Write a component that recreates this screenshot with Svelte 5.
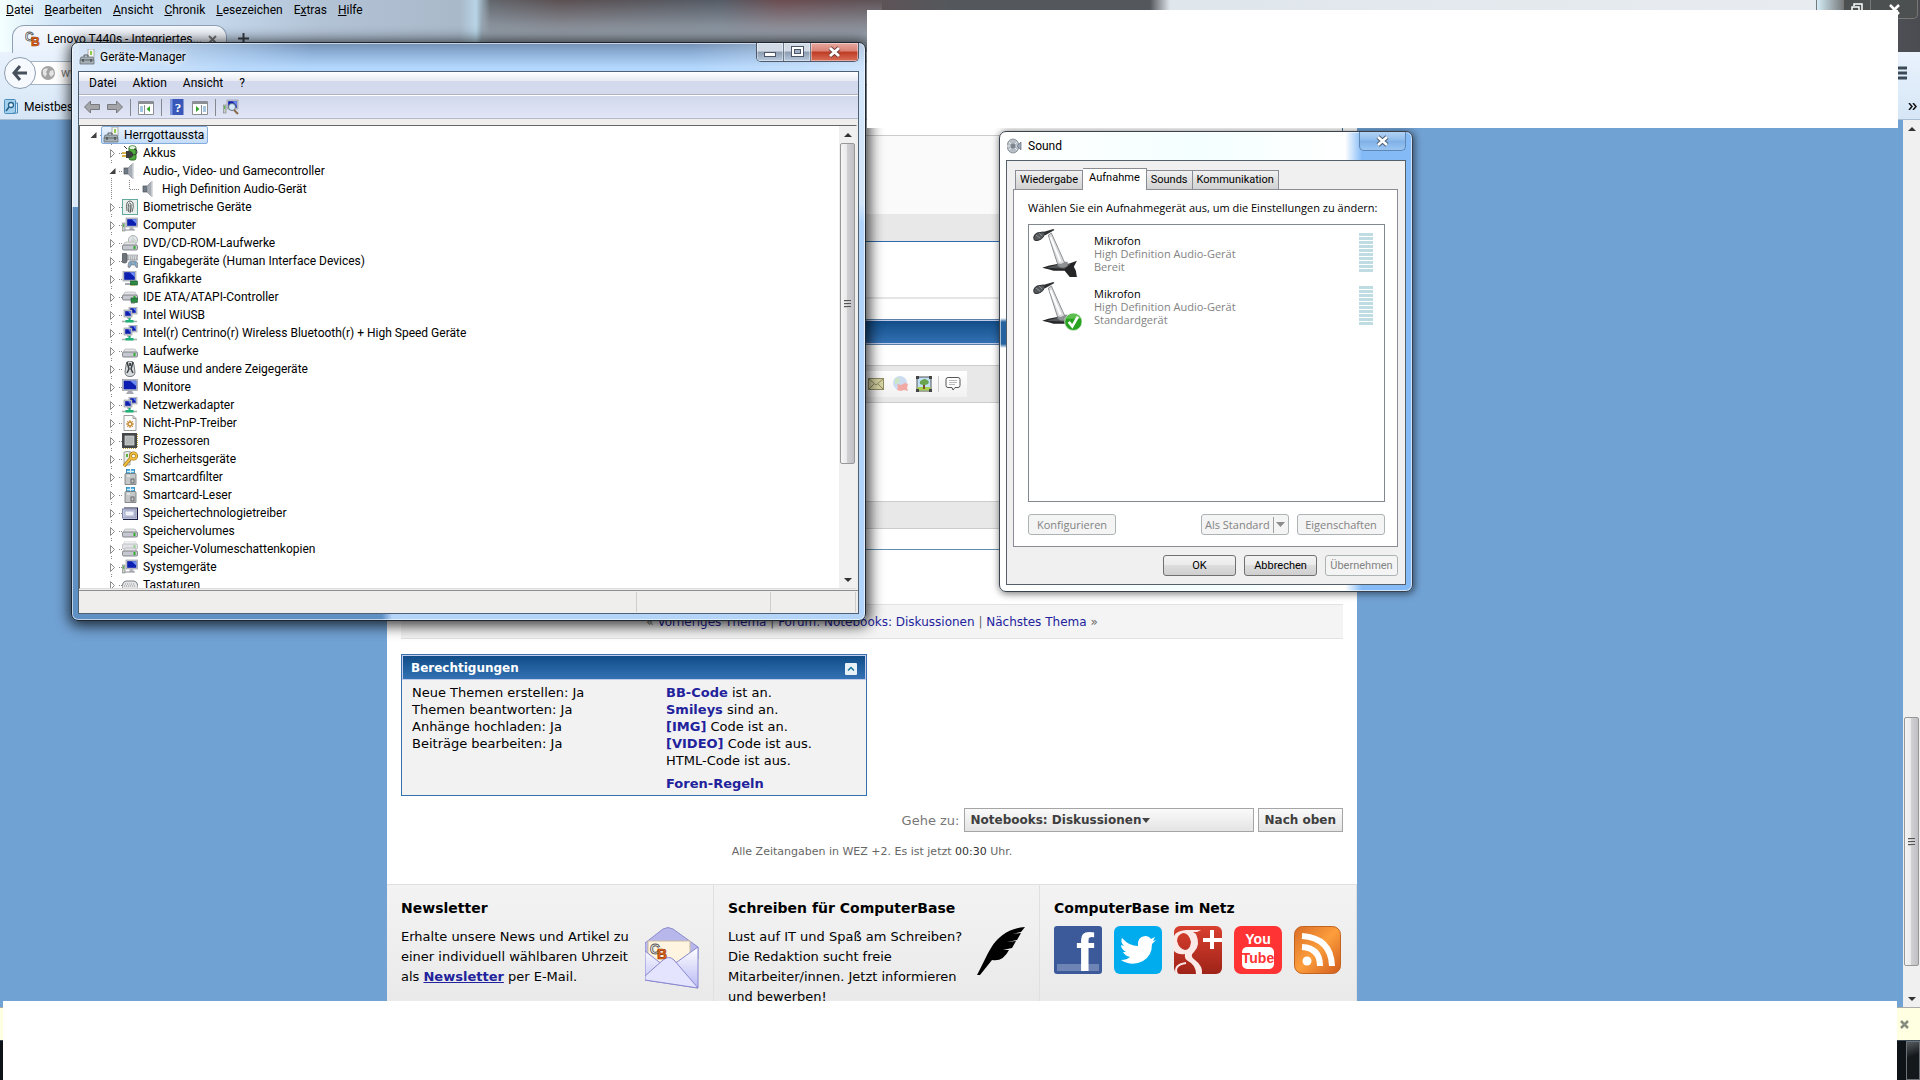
<script lang="ts">
	type Device = { name: string; icon: string; level: number; open?: boolean; leaf?: boolean };

	const browserMenu = ['Datei', 'Bearbeiten', 'Ansicht', 'Chronik', 'Lesezeichen', 'Extras', 'Hilfe'];
	const accessKeys = [0, 0, 0, 0, 0, 1, 0];
	const managerMenu = ['Datei', 'Aktion', 'Ansicht', '?'];

	const devices: Device[] = [
		{ name: 'Herrgottaussta', icon: 'case', level: 0, open: true },
		{ name: 'Akkus', icon: 'battery', level: 1 },
		{ name: 'Audio-, Video- und Gamecontroller', icon: 'speaker', level: 1, open: true },
		{ name: 'High Definition Audio-Gerät', icon: 'speaker', level: 2, leaf: true },
		{ name: 'Biometrische Geräte', icon: 'finger', level: 1 },
		{ name: 'Computer', icon: 'computer', level: 1 },
		{ name: 'DVD/CD-ROM-Laufwerke', icon: 'dvd', level: 1 },
		{ name: 'Eingabegeräte (Human Interface Devices)', icon: 'hid', level: 1 },
		{ name: 'Grafikkarte', icon: 'graphics', level: 1 },
		{ name: 'IDE ATA/ATAPI-Controller', icon: 'ide', level: 1 },
		{ name: 'Intel WiUSB', icon: 'network', level: 1 },
		{ name: 'Intel(r) Centrino(r) Wireless Bluetooth(r) + High Speed Geräte', icon: 'network', level: 1 },
		{ name: 'Laufwerke', icon: 'drive', level: 1 },
		{ name: 'Mäuse und andere Zeigegeräte', icon: 'mouse', level: 1 },
		{ name: 'Monitore', icon: 'monitor', level: 1 },
		{ name: 'Netzwerkadapter', icon: 'network', level: 1 },
		{ name: 'Nicht-PnP-Treiber', icon: 'driver', level: 1 },
		{ name: 'Prozessoren', icon: 'cpu', level: 1 },
		{ name: 'Sicherheitsgeräte', icon: 'key', level: 1 },
		{ name: 'Smartcardfilter', icon: 'card', level: 1 },
		{ name: 'Smartcard-Leser', icon: 'card', level: 1 },
		{ name: 'Speichertechnologietreiber', icon: 'memory', level: 1 },
		{ name: 'Speichervolumes', icon: 'drive', level: 1 },
		{ name: 'Speicher-Volumeschattenkopien', icon: 'shadow', level: 1 },
		{ name: 'Systemgeräte', icon: 'computer', level: 1 },
		{ name: 'Tastaturen', icon: 'keyboard', level: 1 }
	];

	const tabs = ['Wiedergabe', 'Aufnahme', 'Sounds', 'Kommunikation'];
	let activeTab = $state('Aufnahme');
	let selected = $state('Herrgottaussta');

	const recorders = [
		{ name: 'Mikrofon', device: 'High Definition Audio-Gerät', status: 'Bereit', standard: false },
		{ name: 'Mikrofon', device: 'High Definition Audio-Gerät', status: 'Standardgerät', standard: true }
	];
</script>

{#snippet screenShape(x: number, y: number, w: number, h: number)}
	<rect {x} {y} width={w} height={h} fill="#c9ccd2" stroke="#8b9098" stroke-width=".6" />
	<rect x={x + 1.2} y={y + 1.2} width={w - 2.4} height={h - 2.4} fill="#0d1fb0" />
	<path d="M{x + w / 2} {y + 1.2}h{w / 2 - 1.2}v{h / 2}z" fill="#6f8cf0" />
{/snippet}

{#snippet driveShape(y: number)}
	<path d="M2 {y}q0-2 2-2h8q2 0 2 2l1 2H1z" fill="#e3e4e6" stroke="#a5a8ad" stroke-width=".6" />
	<rect x=".5" y={y + 1} width="15" height="5" rx="1.2" fill="#c6c8d0" stroke="#6d7076" stroke-width=".8" />
	<rect x="11.5" y={y + 2} width="2" height="3" fill="#2fae2b" />
{/snippet}

{#snippet icon(name: string)}
	<svg class="icon" viewBox="0 0 16 16" aria-hidden="true">
		{#if name === 'case'}
			<rect x="9" y="0" width="6" height="9" fill="#f6f6f2" stroke="#9b9d9e" stroke-width=".8" />
			<rect x="11" y="2" width="2" height="4" fill="#8ecb4e" />
			<path d="M5 8V6h4v2" fill="none" stroke="#555" />
			<path d="M2 8h12l1 3v4H1v-4z" fill="#a4afb5" stroke="#69747a" stroke-width=".8" />
			<path d="M1 11h14" stroke="#5c666b" />
			<path d="M4 10v3M12 10v3" stroke="#333" />
		{:else if name === 'battery'}
			<rect x="7" y="1" width="7" height="14" rx="2" fill="#4fae3c" stroke="#2b6a20" />
			<ellipse cx="10.500" cy="2.500" rx="3" ry="1.500" fill="#e7efe5" />
			<path d="M0 8h4M0 11h4" stroke="#c99a17" stroke-width="1.400" />
			<path d="M4 6h3q4 0 4 3.500T7 13H4z" fill="#3b3d3e" />
			<path d="M10 10q5 0 5-3t-3-3M2 1l3 3" fill="none" stroke="#333" />
		{:else if name === 'speaker'}
			<rect x="2" y="5" width="4" height="6" fill="#6f7a85" stroke="#4a525a" stroke-width=".7" />
			<path d="M6 5l5-5v16l-5-5z" fill="#a7adb4" stroke="#7f868d" stroke-width=".6" />
			<path d="M11 0v16" stroke="#d8dbde" stroke-width="1.400" />
		{:else if name === 'finger'}
			<rect x=".5" y=".5" width="15" height="15" fill="#e9f0ee" stroke="#62a99d" />
			<path d="M5 12q-1-5 0-8 1-2 3-2t3 2q1 4-1 9M6.500 13q-.5-5 0-8 1-2 2.500 0 .5 4-.5 8M8 14q.5-5 0-8" fill="none" stroke="#444" stroke-width=".8" />
		{:else if name === 'computer'}
			<rect x=".5" y="6" width="2.500" height="8" fill="#c9ccc9" stroke="#7c827c" stroke-width=".6" />
			<rect x="1.200" y="7" width="1" height="3" fill="#41b339" />
			{@render screenShape(4, 1, 11.5, 9)}
			<path d="M8 10h3l1 3H7z" fill="#b5b9bf" />
			<path d="M3 13h10" stroke="#8a8e94" />
		{:else if name === 'dvd'}
			<circle cx="11" cy="5" r="4.500" fill="#e4e8ea" stroke="#9aa0a5" stroke-width=".8" />
			<circle cx="11" cy="5" r="1.300" fill="#fff" stroke="#9aa0a5" stroke-width=".6" />
			<path d="M11 1v2M14 6l-2-1" stroke="#b9dcae" />
			{@render driveShape(9)}
		{:else if name === 'hid'}
			<rect x="5" y="2" width="11" height="5" fill="#d2d5d9" stroke="#888d94" stroke-width=".6" />
			<path d="M6 4h9M6 6h9" stroke="#777" stroke-width=".6" stroke-dasharray="1 1" />
			<rect x="0" y="0" width="5" height="10" rx="2" fill="#70757c" stroke="#43474c" stroke-width=".6" />
			<path d="M6 14q0-6 3-6h4q3 0 3 6-2 2-3-2h-4q-1 4-3 2z" fill="#9ba8b6" stroke="#5f6e80" stroke-width=".6" />
			<path d="M9 9v3M13 9v3" stroke="#4aa3dc" />
		{:else if name === 'graphics'}
			{@render screenShape(1, 0, 13, 10)}
			<path d="M3 13h8" stroke="#a5a9af" stroke-width="2" />
			<rect x="8.500" y="10" width="7" height="4" fill="#2d8a45" stroke="#1a5229" stroke-width=".6" />
			<path d="M10 15v-1M12 15v-1" stroke="#c99a17" />
		{:else if name === 'ide'}
			{@render driveShape(5)}
			<rect x="9" y="9" width="6.500" height="4.500" fill="#2d8a45" stroke="#1a5229" stroke-width=".6" />
			<path d="M10 15v-1M12 15v-1" stroke="#777" />
		{:else if name === 'network'}
			{@render screenShape(7, 0, 8, 7)}
			{@render screenShape(2, 3, 8, 7)}
			<path d="M5 11h4" stroke="#a5a9af" stroke-width="1.500" />
			<path d="M0 14.500h15" stroke="#9eb0a8" stroke-width="1.500" />
			<path d="M6.500 11h2v2h3v2.500h-8V13h3z" fill="#1fb277" />
		{:else if name === 'drive'}
			{@render driveShape(8)}
		{:else if name === 'mouse'}
			<path d="M8 0q4 0 4 4l1 7q0 4.500-5 4.500T3 11l1-7q0-4 4-4z" fill="#d6dadd" stroke="#595e62" stroke-width=".8" />
			<path d="M5 1l2 7-2 4M11 1L9 8l2 4" fill="none" stroke="#3c4246" stroke-width="1.500" />
			<rect x="7.300" y="2" width="1.500" height="3" fill="#222" />
		{:else if name === 'monitor'}
			{@render screenShape(0.5, 0.5, 15, 11)}
			<path d="M6 12h4l2 3H4z" fill="#a5a9af" />
		{:else if name === 'driver'}
			<path d="M2 .5h9l3 3v12H2z" fill="#fcfcfc" stroke="#9c9c9c" />
			<path d="M11 .5v3h3" fill="none" stroke="#9c9c9c" />
			<circle cx="8" cy="9" r="2" fill="#fff3d8" stroke="#c78a35" stroke-width="1.400" />
			<path d="M8 5v2M8 11v2M4 9h2M10 9h2M5.200 6.200l1.400 1.400M9.500 10.500l1.400 1.400M10.900 6.200L9.500 7.600M6.600 10.400l-1.400 1.400" stroke="#c78a35" />
		{:else if name === 'cpu'}
			<path d="M1 15.500h14M15.500 1v13" stroke="#c9a445" stroke-dasharray="1 1" />
			<rect x="0" y="0" width="15" height="15" fill="#45484a" />
			<rect x="3" y="3" width="9" height="9" fill="#b3b7b7" stroke="#e3e5e5" stroke-width=".6" />
		{:else if name === 'key'}
			<path d="M2 1l6-1v14H2z" fill="#e8e9e4" stroke="#8a8d86" stroke-width=".8" />
			<rect x="4" y="3" width="2" height="3" fill="#58b33e" />
			<path d="M2 15l7-8" stroke="#8b640d" stroke-width="3.400" />
			<circle cx="11.500" cy="5" r="3" fill="none" stroke="#8b640d" stroke-width="3" />
			<path d="M2 15l7-8" stroke="#f0be3d" stroke-width="2" />
			<circle cx="11.500" cy="5" r="3" fill="none" stroke="#f0be3d" stroke-width="1.800" />
		{:else if name === 'card'}
			<rect x="4.500" y="0" width="8" height="5" fill="#59b7e8" stroke="#2a7bad" stroke-width=".8" />
			<path d="M8.500 0v5M5 2.500h7" stroke="#d8f0fb" />
			<path d="M4 4.500h9q1 0 1 1v10H3v-10q0-1 1-1z" fill="#c3c7c8" stroke="#6e7475" stroke-width=".8" />
			<path d="M5 7h3" stroke="#fff" />
			<rect x="9" y="10" width="3" height="4" fill="none" stroke="#666" />
		{:else if name === 'memory'}
			<path d="M2 3h13.500v11.500H1" fill="none" stroke="#181c40" stroke-width="1.200" />
			<rect x=".5" y="4" width="13.500" height="9" fill="#c6cbe4" stroke="#8088a8" />
			<rect x="3" y="6" width="9" height="5" fill="#f1f3fb" stroke="#8088a8" stroke-width=".6" />
		{:else if name === 'shadow'}
			<g opacity=".5">{@render driveShape(2)}</g>
			{@render driveShape(9)}
		{:else if name === 'keyboard'}
			<path d="M0 9q1-5 4-5h8q3 0 4 5v3H0z" fill="#e2e4e6" stroke="#6d7278" stroke-width=".9" />
			<path d="M3 7h10M2 9h12" stroke="#999" stroke-dasharray="1 1" />
		{/if}
	</svg>
{/snippet}

{#snippet cbLogo()}
	<text x="0" y="10" class="cb-c">C</text>
	<text x="6" y="15" class="cb-b">B</text>
{/snippet}

{#snippet microphone(standard: boolean)}
	<svg class="mic" viewBox="0 0 48 48" aria-hidden="true">
		<path d="M9 38l6-2 10-2 10 0 8-3-3 6 2 4 1 6h-7l-5-6-11 0-3-1z" fill="#242526" />
		<path d="M13 38l11-3 13-1-6 5z" fill="#55585a" />
		<path d="M24 36q5 4 10 0v-4H24z" fill="#8d9194" />
		<path d="M15 6l3-2 13 29q-4 3-7 1z" fill="#d9dbdc" stroke="#777b7e" stroke-width=".8" />
		<path d="M17 8l10 24" stroke="#fff" stroke-width="2" />
		<path d="M10 3l10-3 1 1-9 5z" fill="#2d2f31" />
		<path d="M1 10q-1-4 3-6l6-1q2 1 1 3-2 4-6 5-3 1-4-1z" fill="#55595c" stroke="#303335" />
		<path d="M3 6l4 3M6 4l3 3" stroke="#9b9fa2" stroke-width=".8" />
		{#if standard}
			<circle cx="39.500" cy="39" r="8.500" fill="#27a31f" stroke="#d8ecd6" stroke-width=".8" />
			<path d="M32 36q3-5 8-5t7 5q-8 0-15 0z" fill="#7fd16d" opacity=".6" />
			<path d="M35 39l3.500 4.500L44 34" fill="none" stroke="#fff" stroke-width="2.600" />
		{/if}
	</svg>
{/snippet}

{#snippet scrollbar(kind: string)}
	<div class="scrollbar {kind}">
		<svg class="arrow" viewBox="0 0 17 17"><path d="M5 11l4-4 4 4z" fill="#333" /></svg>
		<div class="track">
			<div class="thumb"><i></i><i></i><i></i></div>
		</div>
		<svg class="arrow" viewBox="0 0 17 17"><path d="M5 7l4 4 4-4z" fill="#333" /></svg>
	</div>
{/snippet}

<div class="screen">
	<header class="chrome">
		<nav class="menubar">
			{#each browserMenu as item, i}
				<button>{item.slice(0, accessKeys[i])}<u>{item[accessKeys[i]]}</u>{item.slice(accessKeys[i] + 1)}</button>
			{/each}
		</nav>
		<div class="tabstrip">
			<div class="browser-tab">
				<svg class="icon" viewBox="0 0 16 16" aria-hidden="true">{@render cbLogo()}</svg>
				<span class="tab-title">Lenovo T440s - Integriertes...</span>
				<button aria-label="Tab schließen">
					<svg width="9" height="9" viewBox="0 0 9 9"><path d="M1 1l7 7M8 1L1 8" stroke="#777" stroke-width="2" /></svg>
				</button>
			</div>
			<button class="new-tab" aria-label="Neuer Tab">
				<svg width="11" height="11" viewBox="0 0 11 11"><path d="M5.500 0v11M0 5.500h11" stroke="#3a3f47" stroke-width="2" /></svg>
			</button>
		</div>
		<div class="navbar">
			<button class="back" aria-label="Zurück">
				<svg width="16" height="16" viewBox="0 0 16 16"><path d="M8 1L2 8l6 7M2 8h13" fill="none" stroke="#45505c" stroke-width="3" /></svg>
			</button>
			<div class="url">
				<svg width="14" height="14" viewBox="0 0 14 14"><circle cx="7" cy="7" r="7" fill="#a3a3a3" /><path d="M2 4q3-3 5-1l-2 3 1 2-2 3-2-3zM9 5l3-1 1 4-3 3-2-3z" fill="#e4e4e4" /></svg>
				<input aria-label="Adresse" value="www." />
			</div>
			<button class="burger" aria-label="Menü öffnen">
				<svg width="16" height="14" viewBox="0 0 16 14"><path d="M0 2h16M0 7h16M0 12h16" stroke="#3c4a58" stroke-width="3" /></svg>
			</button>
		</div>
		<div class="bookmarks">
			<svg width="14" height="15" viewBox="0 0 14 15"><rect x=".5" y=".5" width="11" height="14" rx="1" fill="#a4d0ee" stroke="#4a8cb8" /><path d="M12 4h1.500v10H9" fill="none" stroke="#4a8cb8" /><circle cx="7" cy="6" r="2.500" fill="#e3f3fc" stroke="#24618c" stroke-width="1.300" /><path d="M5 8l-3 4" stroke="#24618c" stroke-width="1.500" /></svg>
			<a href="#top">Meistbesucht</a>
			<button class="more" aria-label="Weitere Lesezeichen">
				<svg width="9" height="7" viewBox="0 0 9 7"><path d="M1 0l3 3.500L1 7M5 0l3 3.500L5 7" fill="none" stroke="#111" stroke-width="1.500" /></svg>
			</button>
		</div>
		<div class="browser-controls">
			<button class="light" aria-label="Minimieren"><svg width="12" height="10" viewBox="0 0 12 10"><path d="M0 8h12" stroke="#445" stroke-width="4" /><path d="M1 8h10" stroke="#fff" stroke-width="2" /></svg></button>
			<button aria-label="Verkleinern"><svg width="12" height="12" viewBox="0 0 12 12"><path d="M3 3V1h8v8H9M1 4h7v7H1z" fill="none" stroke="#fff" stroke-width="1.500" /></svg></button>
			<button class="wide" aria-label="Schließen"><svg width="11" height="11" viewBox="0 0 11 11"><path d="M1 1l9 9M10 1l-9 9" stroke="#fff" stroke-width="2.500" /></svg></button>
		</div>
	</header>

	<div class="viewport">
		<main class="page">
			<section class="thread">
				<div class="rule-space"></div>
				<div class="post-end"></div>
				<div class="bar blue-line"></div>
				<div class="gap-large"></div>
				<div class="gap-small"></div>
				<div class="head"></div>
				<div class="gap-mini"></div>
				<div class="post-tools">
					<div class="tools">
						<button aria-label="E-Mail"><svg class="icon" viewBox="0 0 16 16"><rect x=".5" y="2.500" width="15" height="11" fill="#d8d5a5" stroke="#8f8c62" /><path d="M1 3l7 6 7-6M1 13l5-5M15 13l-5-5" fill="none" stroke="#8f8c62" /></svg></button>
						<button aria-label="Link entfernen"><svg class="icon" viewBox="0 0 16 16"><circle cx="8" cy="7" r="7" fill="#cbdcf0" /><path d="M3 3q3-2 5 0l-1 4-4 1z" fill="#cbe6c5" /><path d="M5 8l4 1 4-2 3 1-1 4 1 3-4-1-3 1-4-1 1-3z" fill="#f1a9a4" /></svg></button>
						<button aria-label="Bild einfügen"><svg class="icon" viewBox="0 0 16 16"><rect x="1" y="1" width="14" height="14" fill="#bfe0f7" stroke="#555" /><path d="M1.500 11h13v3.500h-13z" fill="#a6cf4a" /><path d="M8 8v5" stroke="#7b5327" stroke-width="2" /><path d="M4 8q-1-3 2-4 3-2 5 0 3 1 1 4-4 2-8 0z" fill="#6aa44f" /><path d="M0 0h3v3H0zM13 0h3v3h-3zM0 13h3v3H0zM13 13h3v3h-3z" fill="#444" /></svg></button>
						<span class="tool-line"></span>
						<button aria-label="Zitat einfügen"><svg class="icon" viewBox="0 0 16 16"><path d="M3 1.500h10q2 0 2 2v6q0 2-2 2h-3L8 14l-1-2.500H3q-2 0-2-2v-6q0-2 2-2z" fill="#fff" stroke="#555" /><path d="M4 4.500h8M4 6.500h8M4 8.500h6" stroke="#bbb" /></svg></button>
					</div>
				</div>
				<div class="editor"></div>
				<div class="bar grey-line"></div>
				<div class="thread-end"></div>
			</section>

			<nav class="thread-nav">
				« <a href="#prev">Vorheriges Thema</a> | <a href="#forum">Forum: Notebooks: Diskussionen</a> | <a href="#next">Nächstes Thema</a> »
			</nav>

			<section class="rights">
				<h2>
					Berechtigungen
					<button aria-label="Einklappen">
						<svg width="12" height="12" viewBox="0 0 12 12"><rect width="12" height="12" rx="1" fill="#e8f1f5" /><path d="M3 7.500l3-3 3 3" fill="none" stroke="#17759b" stroke-width="1.500" /></svg>
					</button>
				</h2>
				<div class="rights-body">
					<ul>
						<li>Neue Themen erstellen: Ja</li>
						<li>Themen beantworten: Ja</li>
						<li>Anhänge hochladen: Ja</li>
						<li>Beiträge bearbeiten: Ja</li>
					</ul>
					<ul>
						<li><a href="#bb">BB-Code</a> ist an.</li>
						<li><a href="#smileys">Smileys</a> sind an.</li>
						<li><a href="#img">[IMG]</a> Code ist an.</li>
						<li><a href="#video">[VIDEO]</a> Code ist aus.</li>
						<li>HTML-Code ist aus.</li>
						<li class="rules"><a href="#rules">Foren-Regeln</a></li>
					</ul>
				</div>
			</section>

			<div class="jump">
				<span>Gehe zu:</span>
				<button class="jump-menu">Notebooks: Diskussionen<svg width="8" height="5" viewBox="0 0 8 5"><path d="M0 0h8L4 5z" fill="#444" /></svg></button>
				<button>Nach oben</button>
			</div>
			<p class="zone">Alle Zeitangaben in WEZ +2. Es ist jetzt <span>00:30</span> Uhr.</p>

			<footer class="site-footer">
				<section>
					<h3>Newsletter</h3>
					<div class="teaser">
						<p>Erhalte unsere News und Artikel zu einer individuell wählbaren Uhrzeit als <a href="#newsletter">Newsletter</a> per E-Mail.</p>
						<svg class="envelope" width="54" height="62" viewBox="0 0 54 62" aria-hidden="true">
							<defs><linearGradient id="env" x2="0" y2="1"><stop offset="0" stop-color="#fff" /><stop offset="1" stop-color="#b9b9f5" /></linearGradient></defs>
							<path d="M0 16L18 2q5-3 10 0l25 18v12H0z" fill="#b7b7ec" stroke="#8d8dcc" />
							<path d="M3 14h42v28H3z" fill="#fff4df" stroke="#c9bda5" />
							<path d="M0 24l18 14 14-3 21-15v41L0 53z" fill="url(#env)" stroke="#8888cf" />
							<path d="M0 49l18-16q6-5 11 0l24 28L0 53z" fill="#e4e4ff" stroke="#8888cf" />
							<g transform="translate(5 15) scale(1.150)">{@render cbLogo()}</g>
						</svg>
					</div>
				</section>
				<section>
					<h3>Schreiben für ComputerBase</h3>
					<div class="teaser">
						<p>Lust auf IT und Spaß am Schreiben? Die Redaktion sucht freie Mitarbeiter/innen. Jetzt informieren und bewerben!</p>
						<svg width="48" height="48" viewBox="0 0 48 48" aria-hidden="true">
							<path d="M0 48C6 37 9 29 14 21 21 9 33 1 48 0l-4 5-9 2 9-1-4 7-10 2 9-1-4 7-9 2 6 0q-6 12-17 10L3 48z" />
						</svg>
					</div>
				</section>
				<section>
					<h3>ComputerBase im Netz</h3>
					<div class="social">
						<a href="#facebook" aria-label="Facebook">
							<svg viewBox="0 0 48 48"><rect width="48" height="48" rx="3" fill="#3c5a99" /><path d="M3 38h42v7H3z" fill="#6e84b5" /><text x="22" y="45" class="fb">f</text></svg>
						</a>
						<a href="#twitter" aria-label="Twitter">
							<svg viewBox="0 0 48 48"><rect width="48" height="48" rx="6" fill="#00aced" /><path d="M8 12q7 8 16 8-1-9 7-10 4 0 6 3l4-2-2 4 3-1-4 4q0 12-9 17-11 6-22-1 6 0 9-3-5-1-7-5h3q-5-3-5-7l3 1q-4-4-2-8z" fill="#fff" /></svg>
						</a>
						<a href="#google" aria-label="Google+">
							<svg viewBox="0 0 48 48">
								<defs><linearGradient id="gp" x2="0" y2="1"><stop offset="0" stop-color="#d9402f" /><stop offset="1" stop-color="#9f2318" /></linearGradient></defs>
								<rect width="48" height="48" rx="6" fill="url(#gp)" />
								<path d="M27 4H12Q2 5 0 10v15q4 4 11 3-1 5 3 7 8 4 8 13h6q1-8-7-14-6-4-1-8 7-7 2-18l-3-2h4zM9 7q6 0 8 9-1 8-6 8-6-1-8-9 0-6 6-8z" fill="#fbe9e7" fill-rule="evenodd" />
								<path d="M3 48Q-1 39 12 37" fill="none" stroke="#fbe9e7" stroke-width="2" />
								<path d="M36 4h4v8h8v4h-8v7h-4v-7h-7v-4h7z" fill="#fff" />
							</svg>
						</a>
						<a href="#youtube" aria-label="YouTube">
							<svg viewBox="0 0 48 48"><rect width="48" height="48" rx="7" fill="#ff3333" /><rect x="8" y="21" width="32" height="22" rx="5" fill="#fff" /><text x="24" y="18" class="yt you">You</text><text x="24" y="37" class="yt">Tube</text></svg>
						</a>
						<a href="#rss" aria-label="RSS">
							<svg viewBox="0 0 48 48">
								<defs><linearGradient id="rss" x2="1" y2="1"><stop offset="0" stop-color="#d96d27" /><stop offset=".5" stop-color="#fc9e3c" /><stop offset="1" stop-color="#d05b1e" /></linearGradient></defs>
								<rect x=".5" y=".5" width="46" height="47" rx="8" fill="url(#rss)" stroke="#c4641f" />
								<circle cx="13" cy="35" r="4.500" fill="#fff" /><path d="M8 21q18 1 18 19M8 10q29 2 30 30" fill="none" stroke="#fff" stroke-width="6" />
							</svg>
						</a>
					</div>
				</section>
			</footer>
		</main>
		{@render scrollbar('page-scroll')}
	</div>

	<div class="notice">
		<button aria-label="Hinweis schließen"><svg width="9" height="9" viewBox="0 0 9 9"><path d="M1 1l7 7M8 1L1 8" stroke="#888c80" stroke-width="2.500" /></svg></button>
	</div>
	<div class="taskbar"><button class="show-desktop" aria-label="Desktop anzeigen"></button></div>

	<section class="window manager">
		<header class="titlebar">
			{@render icon('case')}
			<h1>Geräte-Manager</h1>
			<div class="controls">
				<button aria-label="Minimieren"><svg width="13" height="12" viewBox="0 0 13 12"><rect x=".5" y="6.500" width="11" height="4" fill="#fff" stroke="#4b5566" /></svg></button>
				<button aria-label="Maximieren"><svg width="13" height="12" viewBox="0 0 13 12"><rect x="2" y="2" width="9" height="7" fill="#9fb0c5" stroke="#4b5566" stroke-width="4" /><rect x="2" y="2" width="9" height="7" fill="none" stroke="#fff" stroke-width="2" /></svg></button>
				<button class="close" aria-label="Schließen"><svg width="13" height="12" viewBox="0 0 13 12"><path d="M2 2l9 8M11 2l-9 8" stroke="#6b3a3a" stroke-width="4.500" /><path d="M2 2l9 8M11 2l-9 8" stroke="#fff" stroke-width="3" /></svg></button>
			</div>
		</header>
		<div class="manager-client">
			<nav class="manager-menu">
				{#each managerMenu as item}
					<button>{item}</button>
				{/each}
			</nav>
			<div class="toolbar">
				<button aria-label="Zurück"><svg class="icon" viewBox="0 0 16 16"><path d="M.5 8l6-6v3.500h9v5h-9V14z" fill="#a3a5a8" stroke="#77797c" /></svg></button>
				<button aria-label="Vorwärts"><svg class="icon" viewBox="0 0 16 16"><path d="M15.500 8l-6-6v3.500h-9v5h9V14z" fill="#a3a5a8" stroke="#77797c" /></svg></button>
				<span class="tool-sep"></span>
				<button aria-label="Konsolenstruktur"><svg class="icon" viewBox="0 0 16 16"><path d="M.5 2.500h15v13H.5z" fill="#fff" stroke="#8b8f94" /><path d="M0 4h16" stroke="#8b8f94" stroke-width="2" /><path d="M2 8h3M2 10h3M2 12h3" stroke="#4b8dc0" /><path d="M6.500 6v9" stroke="#8b8f94" /><path d="M12 7v6l-3.500-3z" fill="#31a52c" /></svg></button>
				<span class="tool-sep"></span>
				<button aria-label="Hilfe"><svg class="icon" viewBox="0 0 16 16"><rect x="1.500" width="13" height="16" fill="#3857b8" /><path d="M2.500 0v16" stroke="#7f99e3" stroke-width="2" /><text x="9" y="13" class="help">?</text></svg></button>
				<button aria-label="Aktionsbereich"><svg class="icon" viewBox="0 0 16 16"><path d="M.5 2.500h15v13H.5z" fill="#fff" stroke="#8b8f94" /><path d="M0 4h16" stroke="#8b8f94" stroke-width="2" /><path d="M11 8h3M11 10h3M11 12h3" stroke="#4b8dc0" /><path d="M9.500 6v9" stroke="#8b8f94" /><path d="M4 7v6l3.500-3z" fill="#31a52c" /></svg></button>
				<span class="tool-sep"></span>
				<button aria-label="Nach geänderter Hardware suchen"><svg class="icon" viewBox="0 0 16 16"><rect x=".5" y="6" width="2.500" height="8" fill="#c9ccc9" stroke="#7c827c" stroke-width=".6" /><rect x="1.200" y="7" width="1" height="3" fill="#41b339" />{@render screenShape(4, 1, 11, 9)}<circle cx="9" cy="8" r="3.500" fill="#d5ebf9" stroke="#6a7480" /><path d="M11 11l4 4" stroke="#8a6a4a" stroke-width="2" /></svg></button>
			</div>
			<div class="tree-frame">
				<ul class="tree" role="tree">
					{#each devices as device}
						<li role="treeitem" aria-selected={selected === device.name} class="level-{device.level}" class:leaf={device.leaf}>
							<svg class="expander" viewBox="0 0 11 14" aria-hidden="true">
								{#if device.open}
									<path d="M6.500 4v6H.5z" fill="#404040" />
								{:else if !device.leaf}
									<path d="M1.500 3.500v8l4-4z" fill="#fff" stroke="#8c8c8c" />
								{/if}
								{#if device.leaf}
									<path d="M1.500-2V7" stroke="#888" stroke-dasharray="1 1" />
									<path d="M2 7.500h10" stroke="#888" stroke-dasharray="1 1" />
								{:else}
									<path d="M10 7.500h3" stroke="#888" stroke-dasharray="1 1" />
								{/if}
							</svg>
							<button class="node" class:selected={selected === device.name} onclick={() => (selected = device.name)}>
								{@render icon(device.icon)}
								{device.name}
							</button>
						</li>
					{/each}
				</ul>
				{@render scrollbar('tree-scroll')}
			</div>
			<div class="statusbar"><span></span><span></span><span></span></div>
		</div>
	</section>

	<section class="window sound">
		<header class="titlebar">
			<svg class="icon" viewBox="0 0 16 16" aria-hidden="true"><ellipse cx="6" cy="8" rx="6" ry="7" fill="#b6bdc4" stroke="#8c949b" /><path d="M2 4l8 8M2 12l8-8M0 8h12" stroke="#e6eaed" /><circle cx="6" cy="8" r="2.500" fill="#7d868e" /><path d="M10 8l4-4v8z" fill="#9ba8b8" stroke="#65717d" stroke-width=".7" /></svg>
			<h1>Sound</h1>
			<button class="glass-close" aria-label="Schließen"><svg width="13" height="12" viewBox="0 0 13 12"><path d="M2 2l9 8M11 2l-9 8" stroke="#4f5f75" stroke-width="4.500" /><path d="M2 2l9 8M11 2l-9 8" stroke="#fff" stroke-width="2.500" /></svg></button>
		</header>
		<div class="sound-client">
			<div class="tabs" role="tablist">
				{#each tabs as tab}
					<button role="tab" aria-selected={activeTab === tab} class:active={activeTab === tab} onclick={() => (activeTab = tab)}>{tab}</button>
				{/each}
			</div>
			<div class="panel" role="tabpanel">
				<p>Wählen Sie ein Aufnahmegerät aus, um die Einstellungen zu ändern:</p>
				<ul class="recorders">
					{#each recorders as recorder}
						<li>
							{@render microphone(recorder.standard)}
							<div class="details">
								<strong>{recorder.name}</strong>
								<span>{recorder.device}</span>
								<span>{recorder.status}</span>
							</div>
							<div class="meter">
								{#each Array(10) as _}<i></i>{/each}
							</div>
						</li>
					{/each}
				</ul>
				<div class="panel-buttons">
					<button class="btn" disabled>Konfigurieren</button>
					<button class="btn split" disabled>Als Standard<svg width="16" height="16" viewBox="0 0 16 16"><path d="M1.500 0v16" stroke="#a0a0a0" /><path d="M4 5h9l-4.500 5z" fill="#8c8c8c" /></svg></button>
					<button class="btn" disabled>Eigenschaften</button>
				</div>
			</div>
			<div class="dialog-buttons">
				<button class="btn">OK</button>
				<button class="btn">Abbrechen</button>
				<button class="btn" disabled>Übernehmen</button>
			</div>
		</div>
	</section>

	<div class="blank blank-top"></div>
	<div class="blank blank-bottom"></div>
</div>

<style>
	:global(body) {
		margin: 0;
	}

	.screen,
	.screen :global(*) {
		box-sizing: border-box;
	}

	.screen {
		position: relative;
		display: flex;
		flex-direction: column;
		height: 100vh;
		overflow: hidden;
		background: #71a2d4;
		color: #000;
		font: 12px/18px Roboto, 'Noto Sans', sans-serif;
	}

	h1, h2, h3, p, ul {
		margin: 0;
		padding: 0;
		font-weight: normal;
		list-style: none;
	}

	button {
		margin: 0;
		padding: 0;
		border: 0;
		background: none;
		color: inherit;
		font: inherit;
		white-space: nowrap;
	}

	svg {
		display: block;
		flex: none;
	}

	.icon {
		width: 16px;
		height: 16px;
	}

	.cb-c {
		font: bold 12px 'Liberation Sans', sans-serif;
		fill: #fff;
		stroke: #555;
		stroke-width: 0.8px;
	}

	.cb-b {
		font: bold 12px 'Liberation Sans', sans-serif;
		fill: #f26a1b;
		stroke: #8a2f00;
		stroke-width: 0.6px;
	}

	.help {
		font: bold 13px 'Liberation Serif', serif;
		fill: #fff;
		text-anchor: middle;
	}

	/* browser chrome */
	.chrome {
		position: relative;
		flex: none;
		height: 120px;
		border-bottom: 1px solid #a9bdd2;
		background:
			linear-gradient(#e9f2fd, #d6e6f6) 0 52px / 100% 68px no-repeat,
			linear-gradient(transparent 0, rgba(155, 166, 178, 0.9) 34px) 482px 0 / 400px 52px no-repeat,
			linear-gradient(90deg, #f4ffff 0, #cfe4f6 60px, #c3d6ea 220px, #b3c3d6 320px, #a9b9ca 460px, #b8d4e6 476px, #62666c 490px, #5b5052 560px, #555c66 720px, #6b4c50 780px, #54585c 950px, #54585c 1150px, #dfe6ec 1170px, #e8ecf0 1814px, #d4ecf6 1818px, #55585a 1840px, #4a4c52 100%);
	}

	.menubar {
		display: flex;
		gap: 11px;
		padding: 0 6px;
		height: 20px;
		line-height: 20px;
	}

	.tabstrip {
		display: flex;
		align-items: center;
		height: 32px;
		padding: 5px 0 0 12px;
	}

	.browser-tab {
		display: flex;
		align-items: center;
		gap: 6px;
		width: 215px;
		height: 28px;
		padding: 0 12px;
		border: 1px solid #8fa0b4;
		border-bottom: 0;
		border-radius: 12px 12px 0 0;
		background: linear-gradient(#f6f9fd, #e9f2fd);
	}

	.tab-title {
		flex: 1;
		white-space: nowrap;
	}

	.new-tab {
		margin-left: 11px;
	}

	.navbar {
		display: flex;
		align-items: center;
		height: 42px;
		padding: 0 13px 0 4px;
	}

	.back {
		z-index: 1;
		display: grid;
		place-items: center;
		width: 32px;
		height: 32px;
		border: 1px solid #8d9db0;
		border-radius: 50%;
		background: #f6f9fd;
	}

	.url {
		flex: 1;
		display: flex;
		align-items: center;
		gap: 6px;
		height: 24px;
		margin: 0 50px 0 -6px;
		padding-left: 10px;
		border: 1px solid #a5b3c3;
		background: #fff;
	}

	.url input {
		flex: 1;
		padding: 0;
		border: 0;
		background: none;
		color: #777;
		font: inherit;
	}

	.bookmarks {
		display: flex;
		align-items: center;
		gap: 6px;
		height: 25px;
		padding: 0 3px 0 4px;
	}

	.bookmarks a {
		color: #000;
		text-decoration: none;
	}

	.more {
		margin-left: auto;
	}

	.browser-controls {
		position: absolute;
		top: 0;
		right: 2px;
		display: flex;
		height: 19px;
		border: 1px solid #777;
		border-top: 0;
		border-radius: 0 0 5px 5px;
		background: #4d5050;
	}

	.browser-controls button {
		display: grid;
		place-items: center;
		width: 27px;
		border-right: 1px solid #777;
	}

	.browser-controls .light {
		background: linear-gradient(90deg, #d4ecf6, #777b7e);
	}

	.browser-controls .wide {
		width: 46px;
		border: 0;
	}

	/* forum page */
	.viewport {
		display: flex;
		flex: 1;
		min-height: 0;
		overflow: hidden;
	}

	.page {
		flex: 0 1 970px;
		margin: 0 auto 0 387px;
		background: #fff;
		font: 13px/17px 'DejaVu Sans', sans-serif;
	}

	.page a {
		color: #22229c;
		text-decoration: none;
	}

	.thread {
		margin: 0 14px;
	}

	.rule-space {
		height: 16px;
		border-right: 1px solid #417394;
		border-bottom: 1px solid #ccc;
	}

	.post-end {
		height: 78px;
		background: #fafafa;
	}

	.bar {
		height: 28px;
		background: #e8e8e8;
	}

	.blue-line {
		border-bottom: 1px solid #2e6aad;
	}

	.grey-line {
		border-top: 1px solid #ccc;
		border-bottom: 1px solid #ccc;
	}

	.gap-large {
		height: 57px;
		border-bottom: 2px solid #e5e5e5;
	}

	.gap-small {
		height: 20px;
	}

	.head {
		height: 26px;
		border: 1px solid #5c7fa8;
		outline: 1px solid #c3cbea;
		outline-offset: -2px;
		background: linear-gradient(#0f4c87, #3572b4);
	}

	.gap-mini {
		height: 20px;
	}

	.post-tools {
		height: 38px;
		padding: 5px 0;
		border-top: 1px solid #ccc;
		border-bottom: 1px solid #ccc;
		background: #e8e8e8;
	}

	.tools {
		display: flex;
		justify-content: flex-end;
		align-items: center;
		gap: 8px;
		width: 566px;
		height: 26px;
		padding-right: 6px;
		background: linear-gradient(#fff, #f1f1f1);
	}

	.tool-line {
		width: 1px;
		height: 16px;
		margin: 0 -2px;
		background: #ccc;
	}

	.editor {
		height: 98px;
	}

	.thread-end {
		height: 21px;
		border-bottom: 1px solid #5f8fae;
	}

	.thread-nav {
		height: 35px;
		margin: 54px 14px 0;
		border-top: 1px solid #e2e2e2;
		border-bottom: 1px solid #e2e2e2;
		background: #f4f4f4;
		color: #666;
		font-size: 12px;
		line-height: 34px;
		text-align: center;
	}

	.rights {
		width: 466px;
		margin: 15px 14px 0;
		border: 1px solid #3670ae;
		background: #f2f2f2;
	}

	.rights h2 {
		display: flex;
		justify-content: space-between;
		align-items: center;
		height: 25px;
		padding: 2px 8px 0;
		border: 1px solid #c3cbea;
		background: linear-gradient(#0f4c87, #3572b4);
		color: #fff;
		font-size: 12px;
		font-weight: bold;
	}

	.rights-body {
		display: flex;
		padding: 4px 10px 3px;
	}

	.rights-body ul {
		flex: 1 1 0;
	}

	.rights-body ul + ul {
		flex: none;
		width: 190px;
	}

	.rights a {
		font-weight: bold;
	}

	.rules {
		margin-top: 6px;
	}

	.jump {
		display: flex;
		justify-content: flex-end;
		align-items: center;
		gap: 4px;
		margin: 12px 14px 0;
		color: #777;
	}

	.jump button {
		display: flex;
		align-items: center;
		gap: 1px;
		height: 24px;
		padding: 0 6px;
		border: 1px solid #a5a5a5;
		background: linear-gradient(#fafafa, #e4e4e4);
		color: #3e3e3e;
		font-size: 12px;
		font-weight: bold;
	}

	.jump .jump-menu {
		width: 290px;
	}

	.zone {
		margin-top: 11px;
		color: #666;
		font-size: 11px;
		text-align: center;
	}

	.zone span {
		color: #333;
	}

	.site-footer {
		display: grid;
		grid-template-columns: 327px 326px 1fr;
		height: 160px;
		margin-top: 24px;
		border-top: 1px solid #e0e0e0;
		background: linear-gradient(#f3f3f3, #e6e6e6);
		line-height: 20px;
	}

	.site-footer section {
		padding: 13px 14px;
		border-right: 1px solid #e0e0e0;
	}

	.site-footer h3 {
		margin-bottom: 8px;
		font-size: 14px;
		font-weight: bold;
	}

	.teaser {
		display: flex;
		justify-content: space-between;
		padding-top: 1px;
	}

	.teaser p {
		width: 236px;
	}

	.teaser a {
		font-weight: bold;
		text-decoration: underline;
	}

	.social {
		display: flex;
		gap: 12px;
	}

	.social svg {
		width: 48px;
		height: 48px;
	}

	.fb {
		font: bold 54px 'Liberation Sans', sans-serif;
		fill: #fff;
	}

	.yt {
		font: bold 14px 'Liberation Sans', sans-serif;
		fill: #ff3333;
		text-anchor: middle;
	}

	.you {
		fill: #fff;
	}

	/* scrollbars */
	.scrollbar {
		display: flex;
		flex: none;
		flex-direction: column;
		width: 17px;
		background: #f0f0f0;
	}

	.arrow {
		width: 17px;
		height: 17px;
	}

	.track {
		flex: 1;
		display: flex;
		flex-direction: column;
		padding: 0 1px;
	}

	.page-scroll .track {
		justify-content: flex-end;
		padding-bottom: 24px;
	}

	.thumb {
		display: flex;
		flex-direction: column;
		align-items: center;
		justify-content: center;
		gap: 1px;
		height: 30%;
		border: 1px solid #979797;
		border-radius: 2px;
		background: linear-gradient(90deg, #f5f5f5, #e9e9eb 45%, #d0d0d3 50%, #c0c0c4);
	}

	.tree-scroll .thumb {
		height: 75%;
	}

	.thumb i {
		width: 7px;
		height: 2px;
		border-top: 1px solid #555;
		background: #ccc;
	}

	.notice {
		display: flex;
		justify-content: flex-end;
		align-items: center;
		flex: none;
		height: 33px;
		padding-right: 11px;
		border-top: 1px solid #aaa;
		background: #ffffe1;
	}

	.taskbar {
		display: flex;
		justify-content: flex-end;
		flex: none;
		height: 40px;
		border-top: 1px solid #3b4a56;
		background: #0d1317;
	}

	.show-desktop {
		width: 14px;
		border: 1px solid #6b7378;
		background: linear-gradient(160deg, #555b60, #14181b 40%);
	}

	/* desktop windows */
	.window {
		position: absolute;
		display: flex;
		flex-direction: column;
		border: 1px solid #1c2733;
		border-radius: 7px;
	}

	.titlebar {
		display: flex;
		flex: none;
		align-items: center;
		gap: 5px;
	}

	.titlebar h1 {
		flex: 1;
		font-size: 12px;
		text-shadow: 0 0 6px #fff, 0 0 10px #fff;
	}

	.manager {
		top: 42px;
		left: 71px;
		width: 795px;
		height: 579px;
		padding: 0 6px 6px;
		background:
			linear-gradient(90deg, #5f90c4 0 310px, #b4d4f8 320px) 0 100% / 100% 7px no-repeat,
			linear-gradient(#dbe9f8 0 164px, #5f90c4 164px) 0 0 / 7px 100% no-repeat,
			linear-gradient(90deg, rgba(225, 238, 252, 0.9) 0, rgba(190, 218, 248, 0.5) 160px, transparent 240px, transparent 620px, rgba(225, 238, 252, 0.6) 100%) 0 0 / 100% 28px no-repeat,
			linear-gradient(#7590b3, #8eb0d8 10px, #b2d6fc 24px) 0 0 / 100% 28px no-repeat,
			linear-gradient(#d4e6fa 0 160px, #b2d4fa 180px);
		box-shadow: inset 0 0 0 1px rgba(255, 255, 255, 0.6), 1px 2px 14px 3px rgba(0, 0, 0, 0.75);
	}

	.manager .titlebar {
		height: 28px;
		padding-left: 1px;
	}

	.controls {
		display: flex;
		align-self: flex-start;
		height: 19px;
		border: 1px solid #4e5a6b;
		border-top: 0;
		border-radius: 0 0 5px 5px;
		overflow: hidden;
	}

	.controls button {
		display: grid;
		place-items: center;
		width: 27px;
		border-right: 1px solid #6b7a8d;
		background: linear-gradient(#d2dbe5 0 45%, #8b9bb0 50%, #b9cbe0);
		box-shadow: inset 0 0 0 1px rgba(255, 255, 255, 0.4);
	}

	.controls .close {
		width: 47px;
		border: 0;
		background: linear-gradient(#e8a99f 0, #d98275 45%, #bf3a22 50%, #d9705a);
	}

	.manager-client {
		flex: 1;
		display: flex;
		flex-direction: column;
		min-height: 0;
		border: 1px solid #4e6073;
		background: #f0eded;
	}

	.manager-menu {
		display: flex;
		flex: none;
		gap: 16px;
		height: 23px;
		padding: 0 10px;
		border-bottom: 1px solid #b0b3bd;
		background: linear-gradient(#fff, #e7eaf4 9px, #d4daed 9px);
		line-height: 22px;
	}

	.toolbar {
		display: flex;
		flex: none;
		align-items: center;
		gap: 7px;
		height: 24px;
		margin-bottom: 6px;
		padding: 0 5px;
		border-top: 1px solid #fff;
		border-bottom: 1px solid #b5b9cc;
		background: linear-gradient(#d2d8ec, #e1e6f6);
	}

	.tool-sep {
		width: 1px;
		height: 17px;
		background: #85888f;
	}

	.tree-frame {
		flex: 1;
		display: flex;
		min-height: 0;
		margin-right: 1px;
		border: 1px solid #666;
		border-right-color: #eee;
		border-bottom-color: #ddd;
		background: #fff;
	}

	.tree {
		flex: 1;
		overflow: hidden;
	}

	.tree li {
		display: flex;
		align-items: center;
		height: 18px;
		padding-left: 10px;
		background: repeating-linear-gradient(#888 0 1px, transparent 1px 2px) 31px 0 / 1px 100% no-repeat;
	}

	.tree .level-0 {
		background: none;
	}

	.tree .level-1 {
		padding-left: 29px;
	}

	.tree .level-2 {
		padding-left: 48px;
	}

	.expander {
		width: 11px;
		height: 14px;
		overflow: visible;
		background: #fff;
	}

	.leaf .expander {
		background: none;
	}

	.node {
		display: flex;
		align-items: center;
		gap: 5px;
		height: 18px;
		padding: 0 3px 0 1px;
		border: 1px solid transparent;
		line-height: 16px;
	}

	.node.selected {
		border-color: #84acdd;
		border-radius: 2px;
		background: linear-gradient(#e9f2fd, #c4dcfa);
	}

	.statusbar {
		display: flex;
		flex: none;
		height: 23px;
		margin-top: 1px;
		padding: 1px 2px;
		border-top: 1px solid #8e8e8e;
	}

	.statusbar span {
		width: 85px;
		border-right: 1px solid #d0cdcd;
	}

	.statusbar span:first-child {
		flex: 1;
	}

	.statusbar span:nth-child(2) {
		width: 134px;
	}

	.sound {
		top: 131px;
		left: 999px;
		width: 414px;
		height: 461px;
		padding: 0 6px 6px;
		border-color: #39424c;
		background:
			linear-gradient(transparent 186px, #24639f 190px 212px, transparent 216px) 0 0 / 6px 100% no-repeat,
			linear-gradient(90deg, #fff 0, #f4ffff 200px, #fff 345px, #84bbf7 362px);
		box-shadow: inset 0 0 0 1px rgba(255, 255, 255, 0.6), 1px 1px 7px 1px rgba(0, 0, 0, 0.5);
	}

	.sound .titlebar {
		height: 28px;
		padding-left: 1px;
	}

	.glass-close {
		display: grid;
		place-items: center;
		align-self: flex-start;
		width: 47px;
		height: 19px;
		border: 1px solid #5f86b3;
		border-top: 0;
		border-radius: 0 0 5px 5px;
		background: linear-gradient(#b2d2f3, #8fbcec 45%, #7fb0e6 50%, #9ac6f4);
	}

	.sound-client {
		flex: 1;
		display: flex;
		flex-direction: column;
		padding: 7px 7px 8px 6px;
		border: 1px solid #55606b;
		background: #f0f0f0;
		font-size: 11px;
	}

	.tabs {
		display: flex;
		align-items: flex-end;
		height: 21px;
		padding-left: 2px;
	}

	.tabs button {
		height: 19px;
		padding: 0 4px;
		border: 1px solid #898c95;
		border-left-width: 0;
		border-bottom: 0;
		background: linear-gradient(#f2f2f2, #e0e0e0 50%, #d2d2d2);
	}

	.tabs button:first-child {
		border-left-width: 1px;
	}

	.tabs .active {
		z-index: 1;
		height: 22px;
		margin-bottom: -1px;
		padding: 0 6px 4px;
		background: #fff;
	}

	.panel {
		flex: 1;
		display: flex;
		flex-direction: column;
		padding: 9px 12px 11px 14px;
		border: 1px solid #898c95;
		background: #fff;
		font-family: 'Open Sans', 'Noto Sans', sans-serif;
	}

	.panel p {
		height: 25px;
		white-space: nowrap;
	}

	.recorders {
		flex: 1;
		padding: 4px;
		border: 1px solid #828790;
	}

	.recorders li {
		display: flex;
		height: 53px;
	}

	.mic {
		width: 49px;
		height: 49px;
	}

	.details {
		flex: 1;
		display: flex;
		flex-direction: column;
		padding: 5px 0 0 12px;
		color: #838383;
		line-height: 13px;
	}

	.details strong {
		color: #000;
		font-weight: normal;
	}

	.meter {
		display: flex;
		flex-direction: column;
		gap: 1px;
		padding: 4px 7px 0 0;
	}

	.meter i {
		width: 14px;
		height: 3px;
		background: #c0dce3;
	}

	.panel-buttons,
	.dialog-buttons {
		display: flex;
		justify-content: flex-end;
		gap: 8px;
		padding-top: 12px;
	}

	.dialog-buttons {
		padding-top: 8px;
	}

	.btn {
		width: 88px;
		height: 21px;
		border: 1px solid #707070;
		border-radius: 3px;
		background: linear-gradient(#f2f2f2, #ebebeb 50%, #dddddd 50%, #cfcfcf);
		line-height: 18px;
	}

	.btn:disabled {
		border-color: #adb2b5;
		background: #f4f4f4;
		color: #838383;
	}

	.dialog-buttons .btn {
		width: 73px;
	}

	.panel-buttons .btn:first-child {
		margin-right: auto;
	}

	.split {
		display: flex;
		align-items: center;
		justify-content: space-between;
		padding-left: 3px;
	}

	/* blank areas over the desktop */
	.blank {
		position: absolute;
		background: #fff;
	}

	.blank-top {
		top: 10px;
		right: 22px;
		left: 867px;
		height: 118px;
	}

	.blank-bottom {
		right: 23px;
		bottom: 0;
		left: 3px;
		height: 79px;
	}
</style>
